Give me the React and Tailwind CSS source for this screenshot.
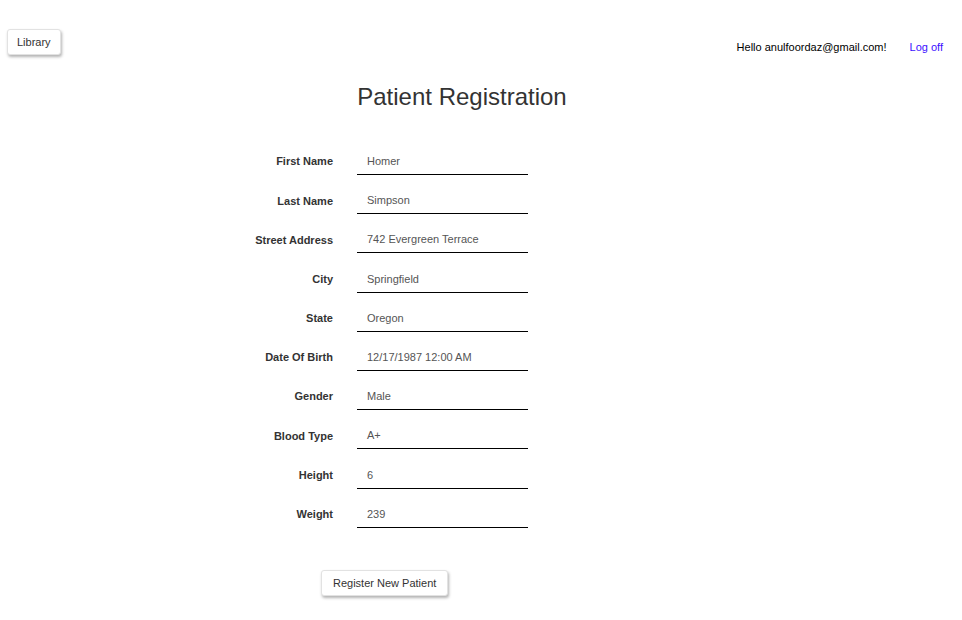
const fields = [
  ["First Name", "Homer"],
  ["Last Name", "Simpson"],
  ["Street Address", "742 Evergreen Terrace"],
  ["City", "Springfield"],
  ["State", "Oregon"],
  ["Date Of Birth", "12/17/1987 12:00 AM"],
  ["Gender", "Male"],
  ["Blood Type", "A+"],
  ["Height", "6"],
  ["Weight", "239"],
];

const btn =
  "h-[26px] rounded-[3px] border border-[#e2e2e2] bg-white text-[11px] text-[#333] shadow-[1px_2px_3px_rgba(0,0,0,0.3)]";

export default function App() {
  return (
    <div className="min-h-[620px] bg-white font-['Liberation_Sans',Arial,sans-serif]">
      <header className="flex items-start justify-between pl-[7px] pr-[19px] pt-[29px]">
        <button className={`${btn} px-[9px] leading-[22px]`}>Library</button>
        <div className="mt-[10px] flex items-center text-[11px] leading-[16px]">
          <span className="text-black">Hello anulfoordaz@gmail.com!</span>
          <a href="#" className="ml-[23px] text-[#3a10ff]">
            Log off
          </a>
        </div>
      </header>

      <h1 className="mt-[28px] pr-[38px] text-center text-[24px] leading-[28px] text-[#333]">
        Patient Registration
      </h1>

      <form className="mt-[31px] ml-[213px] flex flex-col">
        {fields.map(([label, value]) => (
          <div key={label} className="flex h-[39.2px] items-center">
            <label className="w-[120px] text-right text-[11px] font-bold text-[#333]">
              {label}
            </label>
            <div className="ml-[24px] h-[27px] w-[171px] border-b border-black pl-[10px] text-[11px] leading-[26px] text-[#555]">
              {value}
            </div>
          </div>
        ))}
        <div className="mt-[36px] ml-[108px]">
          <button type="button" className={`${btn} px-[11px]`}>
            Register New Patient
          </button>
        </div>
      </form>
    </div>
  );
}
